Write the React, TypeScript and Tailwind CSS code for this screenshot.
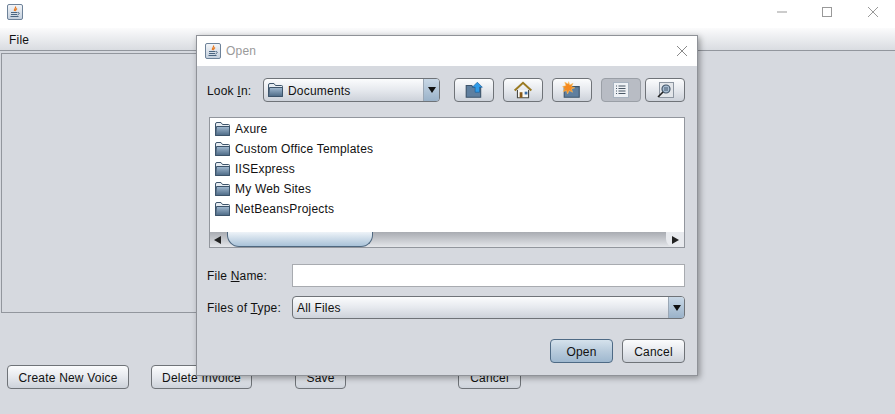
import React from 'react';

const JavaIcon = () => (
  <svg width="16" height="16" viewBox="0 0 16 16" className="shrink-0">
    <defs>
      <linearGradient id="javaBg" x1="0" y1="0" x2="0" y2="1">
        <stop offset="0" stopColor="#f4f6f9" />
        <stop offset="1" stopColor="#c3cfdd" />
      </linearGradient>
    </defs>
    <rect x="0.5" y="0.5" width="15" height="15" rx="1.5" fill="url(#javaBg)" stroke="#6d8299" />
    <path d="M8.5 2.5c1 1.5-2 2.5-1 4.5M10 4.5c-1 1-2 1.5-1 2.5" fill="none" stroke="#e8761a" strokeWidth="1.2" />
    <path d="M4 8.5h6M4 10.5h6M3.5 12.5h8M10.5 8.5c2-.5 2.5 1.5 0 2.5" fill="none" stroke="#4a6580" strokeWidth="1" />
  </svg>
);

const Folder = () => (
  <svg width="17" height="16" viewBox="0 0 17 16" className="shrink-0">
    <defs>
      <linearGradient id="folderFill" x1="0" y1="0" x2="0" y2="1">
        <stop offset="0" stopColor="#a3bbd2" />
        <stop offset="1" stopColor="#4c6985" />
      </linearGradient>
    </defs>
    <path d="M1.5 14.5V3q0-1.5 1.5-1.5h4L8.5 3.5h6q1 0 1 1v10z" fill="#e6ecf2" stroke="#3d546b" />
    <path d="M1.5 14.5 2.5 5.5h13v9z" fill="url(#folderFill)" stroke="#3d546b" />
  </svg>
);

const Underlined = ({ before, letter, after }: { before: string; letter: string; after: string }) => (
  <span>
    {before}
    <span className="underline">{letter}</span>
    {after}
  </span>
);

const JButton = ({ label, className = '' }: { label: string; className?: string }) => (
  <div
    className={`flex h-6 items-center justify-center rounded-[4px] border border-[#6f7378] bg-gradient-to-b from-[#fbfcfd] via-[#e6e9ee] to-[#cdd2da] pt-[2px] text-[#111] ${className}`}
  >
    {label}
  </div>
);

const ToolButton = ({ children, selected = false }: { children: React.ReactNode; selected?: boolean }) => (
  <div
    className={`flex h-6 w-10 items-center justify-center rounded-[4px] border ${
      selected
        ? 'border-[#9a9fa6] bg-[#b8bcc4]'
        : 'border-[#6f7378] bg-gradient-to-b from-[#fbfcfd] via-[#e6e9ee] to-[#cdd2da]'
    }`}
  >
    {children}
  </div>
);

const ComboArrow = ({ className = '' }: { className?: string }) => (
  <div className={`flex items-center justify-center self-stretch border-l border-[#9aa7b5] bg-gradient-to-b from-[#c9d8e6] to-[#9ab2c9] ${className}`}>
    <div className="h-0 w-0 border-x-[4px] border-t-[6px] border-x-transparent border-t-[#111]" />
  </div>
);

const files = ['Axure', 'Custom Office Templates', 'IISExpress', 'My Web Sites', 'NetBeansProjects'];

export default function App() {
  return (
    <div className="relative flex h-[414px] w-[895px] flex-col overflow-hidden bg-[#d6d9df] font-['Liberation_Sans',sans-serif] text-[12px] tracking-[0.2px] text-[#111]">
      {/* window title */}
      <div className="flex h-7 shrink-0 items-center justify-between bg-white pl-[7px]">
        <div className="-mt-[4px]">
          <JavaIcon />
        </div>
        <div className="-mt-[4px] flex items-center">
          <svg width="195" height="16" viewBox="0 0 195 16" className="shrink-0">
            <path d="M77 8h10" stroke="#999" strokeWidth="1" />
            <rect x="122.5" y="3.5" width="9" height="9" fill="none" stroke="#999" strokeWidth="1" />
            <path d="M168 3l10 10M178 3l-10 10" stroke="#999" strokeWidth="1" fill="none" />
          </svg>
        </div>
      </div>

      {/* menu bar */}
      <div className="flex h-[23px] shrink-0 items-center border-b border-[#92969d] bg-gradient-to-b from-[#fbfbfc] to-[#d9dce1] pl-[9px] pt-[2px] text-[#111]">
        File
      </div>

      {/* main content */}
      <div className="flex min-h-0 flex-1 flex-col pl-px pt-[2px]">
        <div className="h-[260px] w-[400px] border border-[#92969d]" />
        <div className="mt-[52px] ml-[6px] flex">
          <JButton label="Create New Voice" className="w-[122px]" />
          <JButton label="Delete Invoice" className="ml-[22px] w-[101px]" />
          <JButton label="Save" className="ml-[43px] w-[51px]" />
          <JButton label="Cancel" className="ml-[112px] w-[63px]" />
        </div>
      </div>

      {/* open dialog */}
      <div className="absolute left-[196px] top-[35px] flex h-[341px] w-[502px] flex-col border border-[#8f9298] bg-[#d6d9df] shadow-[2px_2px_6px_rgba(0,0,0,0.35)]">
        <div className="flex h-[30px] shrink-0 items-center justify-between bg-white pl-[8px] pr-[9px]">
          <div className="flex items-center gap-[5px] text-[#9a9a9a]">
            <JavaIcon />
            <span>Open</span>
          </div>
          <svg width="12" height="12" viewBox="0 0 12 12">
            <path d="M1 1l10 10M11 1L1 11" stroke="#8a8a8a" fill="none" />
          </svg>
        </div>

        <div className="flex flex-1 flex-col pl-[10px] pr-[12px]">
          <div className="mt-[12px] flex h-6 items-center">
            <div className="w-[56px] pt-[2px]">
              <Underlined before="Look " letter="I" after="n:" />
            </div>
            <div className="flex h-[24px] w-[177px] items-center overflow-hidden rounded-[4px] border border-[#6f7378] bg-gradient-to-b from-[#fbfcfd] via-[#e6e9ee] to-[#cdd2da] pl-[3px]">
              <Folder />
              <span className="ml-[4px] flex-1 pt-[1px]">Documents</span>
              <ComboArrow className="w-[16px]" />
            </div>
            <div className="ml-[14px] flex gap-[9px]">
              <ToolButton>
                <svg width="20" height="18" viewBox="0 0 18 16">
                  <path d="M2 14.5V4h5l1 1.5h7v9z" fill="#5f7f9f" stroke="#3d546b" />
                  <path d="M12 1l4.5 4.5H14V10h-4V5.5H7.5z" fill="#2f9be8" stroke="#1c5f9c" strokeWidth="0.6" />
                </svg>
              </ToolButton>
              <ToolButton>
                <svg width="20" height="18" viewBox="0 0 18 16">
                  <path d="M4 8v7h10V8" fill="#f7f7f4" stroke="#4b4b46" />
                  <path d="M1.5 8.5 9 1.5l7.5 7" fill="none" stroke="#9a7a22" strokeWidth="1.8" />
                  <rect x="6" y="10" width="2.5" height="5" fill="#8a5a18" />
                  <rect x="10.5" y="9.5" width="2.5" height="2.5" fill="#3b6ea8" />
                </svg>
              </ToolButton>
              <ToolButton>
                <svg width="20" height="18" viewBox="0 0 18 16">
                  <path d="M2 14.5V5h13.5v9.5z" fill="#5f7f9f" stroke="#3d546b" />
                  <path d="M6 0.5l1 3 3-1.5-1.5 3 3 1-3 1 1 3-3-1.5-1.5 3-1-3-3 1 1.5-3L0.5 5l3-1-1-3 3 1.5z" fill="#f58a1f" stroke="#f9c66b" strokeWidth="0.5" />
                </svg>
              </ToolButton>
              <ToolButton selected>
                <svg width="16" height="16" viewBox="0 0 16 16">
                  <rect x="0.5" y="0.5" width="15" height="15" fill="#eef1f5" stroke="#a8b3c0" />
                  <path d="M3 4h1M3 6.5h1M3 9h1M3 11.5h1M5.5 4h7M5.5 6.5h7M5.5 9h7M5.5 11.5h7" stroke="#4a5866" />
                </svg>
              </ToolButton>
              <div className="-ml-[5px]">
                <ToolButton>
                  <svg width="18" height="16" viewBox="0 0 18 16">
                    <rect x="3.5" y="0.5" width="14" height="15" fill="#e3e6ea" stroke="#8d96a1" />
                    <circle cx="10" cy="7" r="4" fill="#a9bed3" stroke="#44586c" strokeWidth="1.2" />
                    <path d="M8 6h4M8 8h4" stroke="#44586c" />
                    <path d="M7 10l-5 5" stroke="#222" strokeWidth="1.6" />
                  </svg>
                </ToolButton>
              </div>
            </div>
          </div>

          {/* file list */}
          <div className="ml-[2px] mt-[15px] flex h-[131px] flex-col border border-[#92969d] bg-white">
            <div className="flex-1 pl-[4px] pt-[1px]">
              {files.map((name) => (
                <div key={name} className="flex h-5 items-center gap-[4px]">
                  <Folder />
                  <span>{name}</span>
                </div>
              ))}
            </div>
            <div className="flex h-[15px] shrink-0 items-stretch bg-gradient-to-b from-[#a9acb2] to-[#e4e6ea]">
              <div className="flex w-[14px] items-center justify-center">
                <div className="h-0 w-0 border-y-[4px] border-r-[7px] border-y-transparent border-r-[#222]" />
              </div>
              <div className="ml-[3px] w-[146px] rounded-b-[12px] border border-t-0 border-[#4f6880] bg-gradient-to-b from-[#eef3f8] to-[#a9c2d8]" />
              <div className="flex-1" />
              <div className="flex w-[18px] items-center justify-center rounded-bl-[8px] bg-[#e8eaee]">
                <div className="h-0 w-0 border-y-[4px] border-l-[7px] border-y-transparent border-l-[#222]" />
              </div>
            </div>
          </div>

          {/* name and type */}
          <div className="mt-[16px] flex h-[23px] items-center">
            <div className="w-[85px]">
              <Underlined before="File " letter="N" after="ame:" />
            </div>
            <div className="h-[23px] flex-1 border border-[#a8abb0] bg-white" />
          </div>
          <div className="mt-[9px] flex h-[23px] items-center">
            <div className="w-[85px]">
              <Underlined before="Files of " letter="T" after="ype:" />
            </div>
            <div className="flex h-[23px] flex-1 items-center overflow-hidden rounded-[4px] border border-[#6f7378] bg-gradient-to-b from-[#fbfcfd] via-[#e6e9ee] to-[#cdd2da] pl-[4px]">
              <span className="flex-1">All Files</span>
              <ComboArrow className="w-[16px]" />
            </div>
          </div>

          <div className="mt-[20px] flex justify-end gap-[9px]">
            <JButton label="Open" className="w-[63px] !border-[#4e6a85] !from-[#d5e2ec] !via-[#b8cbdc] !to-[#9fb8cf]" />
            <JButton label="Cancel" className="w-[63px]" />
          </div>
        </div>
      </div>
    </div>
  );
}
